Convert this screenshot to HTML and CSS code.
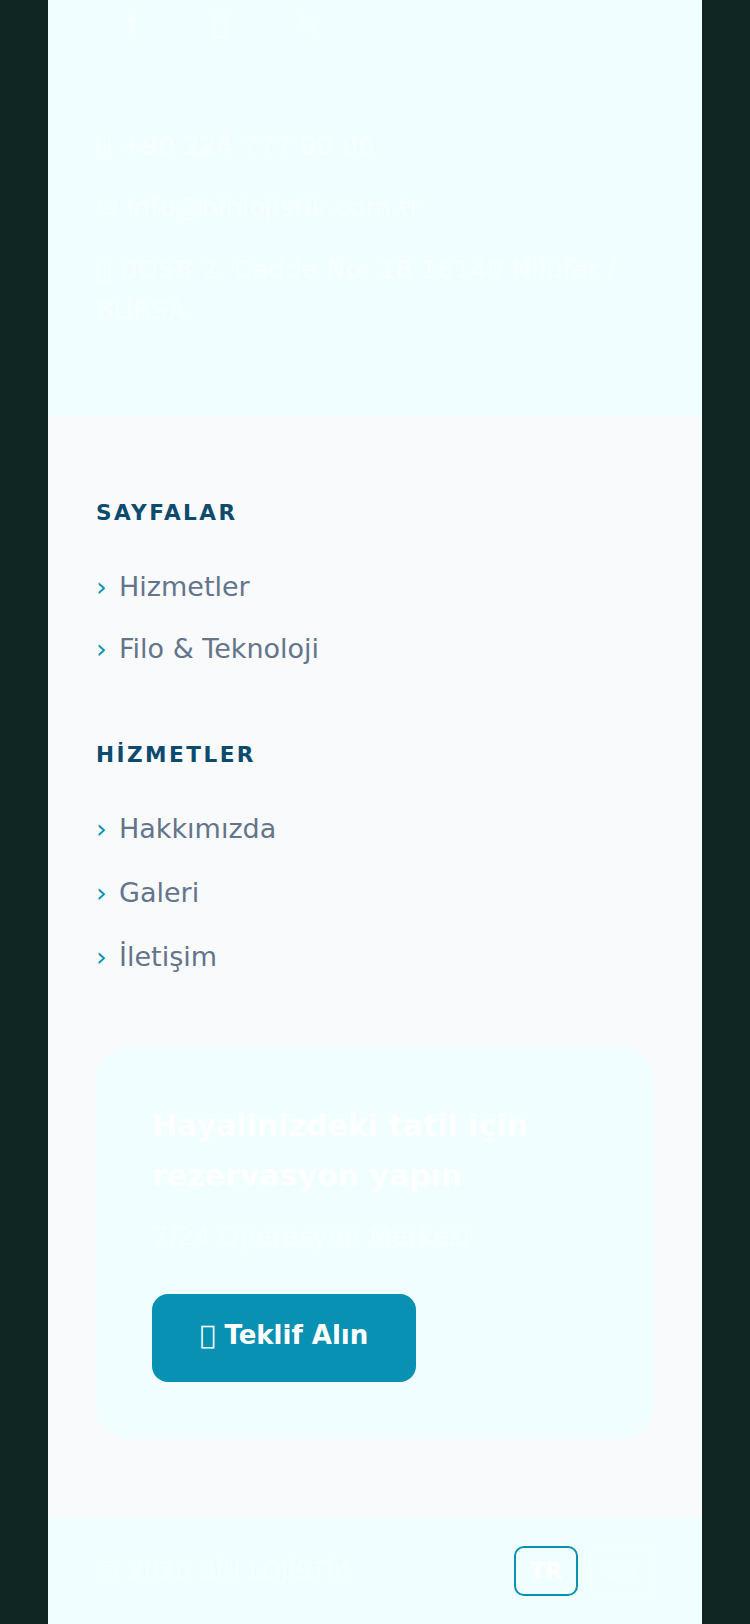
FILE: index.html
```html
<html>
<head>
    <meta charset="utf-8">
    <link rel="stylesheet" href="styles.css">
</head>
<body>
    <div class="page">
        <div class="contact-block">
            <div class="social">
                <a class="social-link">f</a>
                <a class="social-link">&#xf16d;</a>
                <a class="social-link">&#x1D54F;</a>
            </div>
            <p class="contact-line phone">&#xf095; +90 224 777 00 00</p>
            <p class="contact-line mail">✉ info@bihlojistik.com.tr</p>
            <p class="contact-line address">&#xf3c5; BOSB 2. Cadde No: 18 16140 Nilüfer / BURSA</p>
        </div>

        <div class="links-block">
            <h4 class="links-title">SAYFALAR</h4>
            <ul class="links">
                <li><span class="chevron">›</span>Hizmetler</li>
                <li><span class="chevron">›</span>Filo &amp; Teknoloji</li>
            </ul>

            <h4 class="links-title second">HİZMETLER</h4>
            <ul class="links tall">
                <li><span class="chevron">›</span>Hakkımızda</li>
                <li><span class="chevron">›</span>Galeri</li>
                <li><span class="chevron">›</span>İletişim</li>
            </ul>

            <div class="cta">
                <h3 class="cta-title">Hayalinizdeki tatil için rezervasyon yapın</h3>
                <p class="cta-text">7/24 Operasyon Merkezi</p>
                <a class="cta-button">&#xf1d8; Teklif Alın</a>
            </div>
        </div>

        <div class="bottom-bar">
            <span class="copyright">© 2026 BİH LOJİSTİK</span>
            <div class="lang">
                <button class="lang-btn active">TR</button>
                <button class="lang-btn">EN</button>
            </div>
        </div>
    </div>
</body>
</html>
```

FILE: styles.css
```css
html, body {
    margin: 0;
    height: 1624px;
    overflow: hidden;
}

body {
    font-family: "DejaVu Sans", sans-serif;
    background-color: #102622;
    font-size: 25.6px;
    line-height: 1.7;
    letter-spacing: 0.3px;
}

.page {
    width: 654px;
    margin: 0 auto;
    padding-top: 1px;
}

/* top part, contact details */
.contact-block {
    height: 427px;
    margin-top: -12px;
    box-sizing: border-box;
    padding: 0 48px;
    background-color: #f0feff;
    color: rgba(255, 255, 255, 0.6);
}

.social {
    display: flex;
    gap: 16px;
}

.social-link {
    width: 72px;
    height: 72px;
    display: flex;
    align-items: center;
    justify-content: center;
}

.contact-line {
    margin: 0;
}

.phone {
    padding-top: 63px;
}

.mail {
    margin-top: 18px;
}

.address {
    margin-top: 20px;
    line-height: 41px;
}

/* link columns */
.links-block {
    height: 1102px;
    box-sizing: border-box;
    padding: 79px 48px 0;
    background-color: #f8fafc;
}

.links-title {
    margin: 0;
    font-size: 21.6px;
    line-height: 36px;
    font-weight: bold;
    letter-spacing: 2.45px;
    color: #0c4a6e;
}

.links-title.second {
    margin-top: 49px;
}

.links {
    list-style: none;
    margin: 33px 0 0;
    padding: 0;
    font-size: 27px;
    line-height: 46px;
    letter-spacing: 0;
    color: #64748b;
}

.links li {
    height: 62px;
}

.links.tall li {
    height: 64px;
}

.chevron {
    display: inline-block;
    width: 23px;
    color: #0891b2;
}

/* call to action card */
.cta {
    margin-top: 50px;
    height: 391px;
    box-sizing: border-box;
    padding: 53px 56px;
    border-radius: 32px;
    background-color: #f0feff;
}

.cta-title {
    margin: 0;
    font-size: 30px;
    line-height: 50px;
    font-weight: bold;
    letter-spacing: 0;
    color: rgba(255, 255, 255, 0.9);
}

.cta-text {
    margin: 14px 0 0;
    color: rgba(255, 255, 255, 0.55);
}

.cta-button {
    display: block;
    width: 264px;
    height: 88px;
    margin-top: 35px;
    border-radius: 16px;
    background-color: #0891b2;
    color: #fff;
    font-size: 26px;
    font-weight: bold;
    line-height: 82px;
    letter-spacing: 0;
    text-align: center;
}

/* copyright and language switch */
.bottom-bar {
    display: flex;
    justify-content: space-between;
    align-items: center;
    height: 106px;
    box-sizing: border-box;
    padding: 0 48px;
    background-color: #f0feff;
    color: rgba(255, 255, 255, 0.5);
}

.copyright {
    font-size: 24px;
}

.lang {
    display: flex;
    gap: 12px;
}

.lang-btn {
    width: 64px;
    height: 50px;
    padding: 0;
    font-family: "DejaVu Sans", sans-serif;
    font-size: 22.4px;
    font-weight: bold;
    color: rgba(255, 255, 255, 0.4);
    background-color: transparent;
    border: 2px solid rgba(255, 255, 255, 0.2);
    border-radius: 10px;
}

.lang-btn.active {
    color: #fff;
    border-color: #0891b2;
}
```
